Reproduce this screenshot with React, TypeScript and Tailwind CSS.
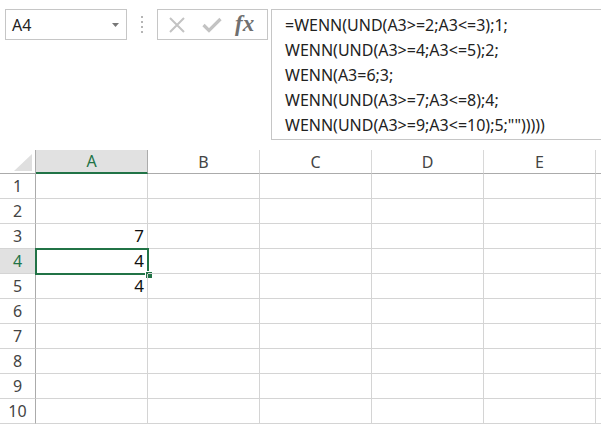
import React from 'react';

const COLS = ['A', 'B', 'C', 'D', 'E'];
const ROWS = [1, 2, 3, 4, 5, 6, 7, 8, 9, 10];
const VALUES: Record<number, string> = { 3: '7', 4: '4', 5: '4' };

const FORMULA = [
  '=WENN(UND(A3>=2;A3<=3);1;',
  'WENN(UND(A3>=4;A3<=5);2;',
  'WENN(A3=6;3;',
  'WENN(UND(A3>=7;A3<=8);4;',
  'WENN(UND(A3>=9;A3<=10);5;"")))))',
];

const font = { fontFamily: '"Noto Sans", "Open Sans", sans-serif' };

const FormulaBar: React.FC = () => (
  <div className="flex items-start h-[150px] pt-[9px] pl-[5px]">
    {/* name box */}
    <div className="w-[122px] h-[31px] border border-[#c6c6c6] flex items-center pl-[6px] pr-[7px] text-[16px] text-[#222]">
      <span className="flex-1">A4</span>
      <svg width="7" height="4" viewBox="0 0 7 4">
        <path d="M0 0h7L3.5 4z" fill="#777" />
      </svg>
    </div>
    {/* grip */}
    <div className="w-[30px] h-[31px] flex flex-col items-center justify-center gap-[3px]">
      <span className="w-[2px] h-[2px] bg-[#b5b5b5]" />
      <span className="w-[2px] h-[2px] bg-[#b5b5b5]" />
      <span className="w-[2px] h-[2px] bg-[#b5b5b5]" />
      <span className="w-[2px] h-[2px] bg-[#b5b5b5]" />
    </div>
    {/* cancel / enter / fx */}
    <div className="w-[111px] h-[31px] border border-[#c6c6c6] flex items-center">
      <svg width="18" height="16" viewBox="0 0 18 16" className="ml-[10px]">
        <path d="M2 1l14 14M16 1L2 15" stroke="#c3c3c3" strokeWidth="2" fill="none" />
      </svg>
      <svg width="20" height="16" viewBox="0 0 20 16" className="ml-[16px]">
        <path d="M1.5 8l5.5 5.5L18.5 2" stroke="#c3c3c3" strokeWidth="3.2" fill="none" />
      </svg>
      <span
        className="ml-[13px] text-[23px] italic font-bold text-[#707070] leading-none pb-[3px]"
        style={{ fontFamily: '"Liberation Serif", serif' }}
      >
        fx
      </span>
    </div>
    {/* formula text */}
    <div className="ml-[3px] flex-1 h-[131px] border border-r-0 border-[#c6c6c6] pl-[13px] pt-[3px] text-[16px] leading-[25px] text-[#222]">
      {FORMULA.map((line, i) => (
        <div key={i} className="whitespace-pre">{line}</div>
      ))}
    </div>
  </div>
);

const Sheet: React.FC = () => (
  <div className="grid grid-cols-[36px_repeat(5,112px)_1fr]">
    {/* corner */}
    <div className="h-[24px] border-r border-b border-[#ababab] flex items-end justify-end pr-[3px] pb-[2px]">
      <svg width="18" height="17" viewBox="0 0 18 17">
        <path d="M18 0v17H0z" fill="#dfdfdf" />
      </svg>
    </div>
    {COLS.map((c) => {
      const sel = c === 'A';
      return (
        <div
          key={c}
          className={
            'h-[24px] flex items-center justify-center text-[16px] border-r ' +
            (sel
              ? 'bg-[#e1e1e1] text-[#217346] border-b-2 border-b-[#217346] border-r-[#ababab]'
              : 'text-[#444] border-b border-b-[#ababab] border-r-[#d8d8d8]')
          }
        >
          {c}
        </div>
      );
    })}
    <div className="h-[24px] border-b border-b-[#ababab]" />

    {ROWS.map((r) => {
      const sel = r === 4;
      return (
        <React.Fragment key={r}>
          <div
            className={
              'h-[25px] flex items-center justify-center text-[16px] border-r border-r-[#ababab] border-b border-b-[#d4d4d4] ' +
              (sel ? 'bg-[#e1e1e1] text-[#217346]' : 'text-[#444]')
            }
          >
            {r}
          </div>
          {COLS.map((c) => (
            <div
              key={c}
              className="relative h-[25px] border-r border-b border-[#d4d4d4] flex items-center justify-end pr-[3px] text-[17px] text-[#111]"
            >
              {c === 'A' ? VALUES[r] ?? '' : ''}
              {c === 'A' && sel && (
                <div className="absolute left-[-1px] top-[-1px] w-[114px] h-[27px] border-2 border-[#217346]">
                  <div className="absolute right-[-5px] bottom-[-5px] w-[7px] h-[7px] bg-[#217346] border-t border-l border-white" />
                </div>
              )}
            </div>
          ))}
          <div className="h-[25px] border-b border-[#d4d4d4]" />
        </React.Fragment>
      );
    })}
  </div>
);

export default function App() {
  return (
    <div className="w-[601px] h-[426px] bg-white overflow-hidden" style={font}>
      <FormulaBar />
      <Sheet />
    </div>
  );
}
